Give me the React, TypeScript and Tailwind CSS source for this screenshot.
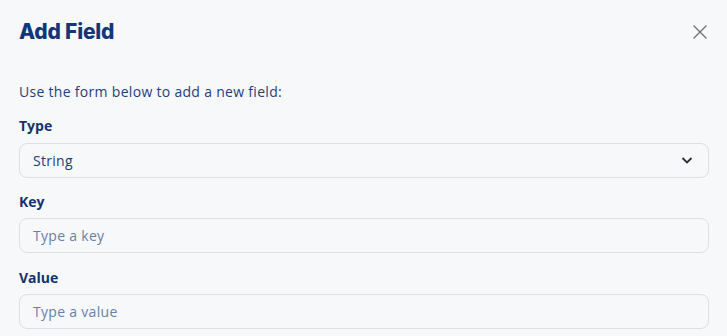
import { useState } from "react";

const FIELD_CLASS =
  "w-full h-[35px] rounded-[8px] border border-[#dcdfe4] bg-[#f7f8fa] px-[13px] text-[14px] tracking-[0.3px] text-[#1c3c7b] placeholder-[#6a7fab] outline-none";

export default function App() {
  const [type, setType] = useState("String");
  const [key, setKey] = useState("");
  const [value, setValue] = useState("");

  return (
    <div
      className="min-h-screen w-full bg-[#f7f8fa] pl-[19px] pr-[18px] pt-[20px] text-[#1c3c7b]"
      style={{ fontFamily: "'Open Sans', 'Noto Sans', sans-serif" }}
    >
      {/* Header */}
      <div className="flex items-center justify-between h-[24px]">
        <h1
          className="text-[21px] font-extrabold text-[#123679] tracking-[-0.2px]"
          style={{ fontFamily: "Inter, 'Noto Sans', sans-serif" }}
        >
          Add Field
        </h1>
        <button className="mr-[0px] text-[#737373]" aria-label="Close">
          <svg width="18" height="18" viewBox="0 0 18 18" fill="none" stroke="currentColor" strokeWidth="1.4">
            <path d="M2.5 2.5l13 13M15.5 2.5l-13 13" />
          </svg>
        </button>
      </div>

      <p className="mt-[38px] text-[14px] leading-[20px] tracking-[0.3px] text-[#1f3f7a]">
        Use the form below to add a new field:
      </p>

      {/* Type */}
      <label className="mt-[14px] block text-[14px] font-bold leading-[20px] text-[#14336e]">Type</label>
      <div className="relative mt-[7px]">
        <select
          value={type}
          onChange={(e) => setType(e.target.value)}
          className={`${FIELD_CLASS} appearance-none`}
        >
          <option>String</option>
          <option>Number</option>
          <option>Boolean</option>
        </select>
        <svg
          className="pointer-events-none absolute right-[16px] top-[12px] text-[#2b2f3a]"
          width="12"
          height="10"
          viewBox="0 0 12 10"
          fill="none"
          stroke="currentColor"
          strokeWidth="1.8"
        >
          <path d="M1.5 3l4.5 4.5L10.5 3" />
        </svg>
      </div>

      {/* Key */}
      <label className="mt-[14px] block text-[14px] font-bold leading-[20px] text-[#14336e]">Key</label>
      <input
        value={key}
        onChange={(e) => setKey(e.target.value)}
        placeholder="Type a key"
        className={`${FIELD_CLASS} mt-[6px] block`}
      />

      {/* Value */}
      <label className="mt-[15px] block text-[14px] font-bold leading-[20px] text-[#14336e]">Value</label>
      <input
        value={value}
        onChange={(e) => setValue(e.target.value)}
        placeholder="Type a value"
        className={`${FIELD_CLASS} mt-[6px] block`}
      />
    </div>
  );
}
